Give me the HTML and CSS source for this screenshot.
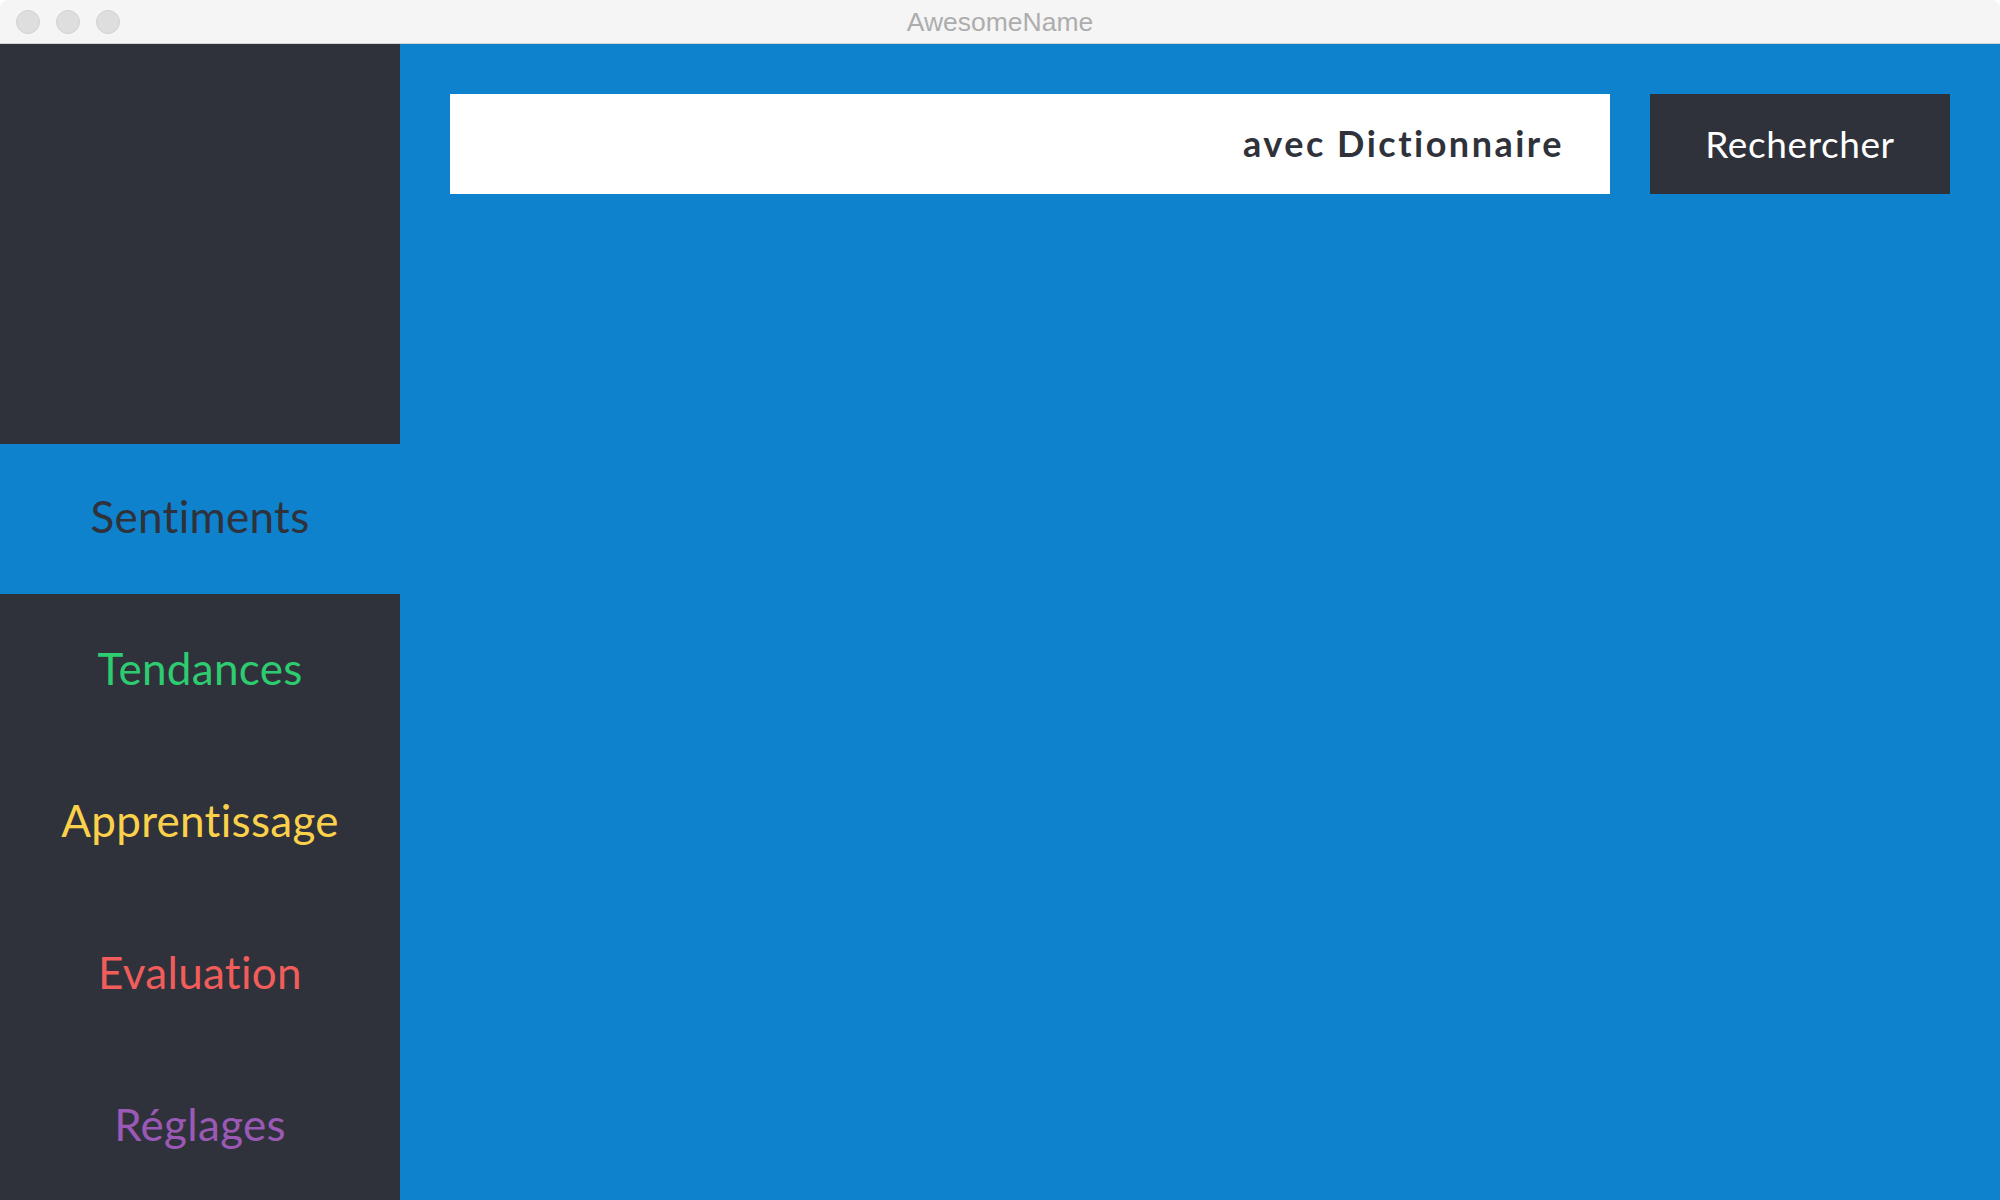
FILE: index.html
```html
<!DOCTYPE html>
<html lang="fr">
<head>
<meta charset="utf-8">
<title>AwesomeName</title>
<link rel="stylesheet" href="styles.css">
</head>
<body>
<div class="window">
  <header class="titlebar">
    <div class="lights">
      <span class="light"></span>
      <span class="light"></span>
      <span class="light"></span>
    </div>
    <div class="title">AwesomeName</div>
  </header>
  <div class="main">
    <nav class="sidebar">
      <div class="logo"></div>
      <div class="item active">Sentiments</div>
      <div class="item green">Tendances</div>
      <div class="item yellow">Apprentissage</div>
      <div class="item red">Evaluation</div>
      <div class="item purple">Réglages</div>
    </nav>
    <section class="content">
      <div class="searchrow">
        <div class="search"><span class="search-text">avec Dictionnaire</span></div>
        <div class="button">Rechercher</div>
      </div>
    </section>
  </div>
</div>
</body>
</html>
```

FILE: styles.css
```css
html, body {
  margin: 0;
  padding: 0;
  width: 2000px;
  height: 1200px;
  overflow: hidden;
  background: #ffffff;
}

.window {
  display: flex;
  flex-direction: column;
  width: 2000px;
  height: 1200px;
}

.titlebar {
  position: relative;
  height: 43px;
  flex: 0 0 43px;
  background: #f5f5f5;
  border-bottom: 1px solid #d3d3d3;
  border-radius: 8px 8px 0 0;
  display: flex;
  align-items: center;
  justify-content: center;
}

.lights {
  position: absolute;
  left: 16px;
  top: 10px;
  display: flex;
  gap: 16px;
}

.light {
  width: 22px;
  height: 22px;
  border-radius: 50%;
  background: #dedede;
  border: 1px solid #d2d2d2;
}

.title {
  font-family: "Liberation Sans", Arial, sans-serif;
  font-size: 26.5px;
  color: #adadad;
  line-height: 43px;
  padding-top: 2px;
}

.main {
  flex: 1;
  display: flex;
  min-height: 0;
  background: #0e82cc;
}

.sidebar {
  width: 400px;
  flex: 0 0 400px;
  background: #2f323a;
  display: flex;
  flex-direction: column;
  overflow: hidden;
}

.logo {
  height: 400px;
  flex: 0 0 400px;
}

.item {
  height: 152px;
  flex: 0 0 152px;
  box-sizing: border-box;
  padding-bottom: 4px;
  display: flex;
  align-items: center;
  justify-content: center;
  font-family: Lato, "DejaVu Sans", sans-serif;
  font-size: 44px;
  letter-spacing: 0.3px;
}

.item.active {
  height: 150px;
  flex: 0 0 150px;
  padding-bottom: 6px;
  background: #0e82cc;
  color: #2f323a;
}

.green { color: #2ecc71; }
.yellow { color: #fbd14b; }
.red { color: #f05d5b; }
.purple { color: #9b59b6; }

.content {
  flex: 1;
  padding: 50px 50px 0 50px;
}

.searchrow {
  display: flex;
  gap: 40px;
  height: 100px;
}

.search {
  flex: 1;
  background: #ffffff;
  display: flex;
  align-items: center;
  justify-content: flex-end;
  padding-right: 46px;
}

.search-text {
  font-family: Lato, "DejaVu Sans", sans-serif;
  font-weight: 700;
  font-size: 36px;
  letter-spacing: 2.5px;
  color: #2f323a;
  padding-bottom: 2px;
}

.button {
  width: 300px;
  flex: 0 0 300px;
  background: #2f323a;
  color: #ffffff;
  display: flex;
  align-items: center;
  justify-content: center;
  font-family: Lato, "DejaVu Sans", sans-serif;
  font-size: 37px;
  letter-spacing: 0.6px;
  padding-bottom: 2px;
}
```
